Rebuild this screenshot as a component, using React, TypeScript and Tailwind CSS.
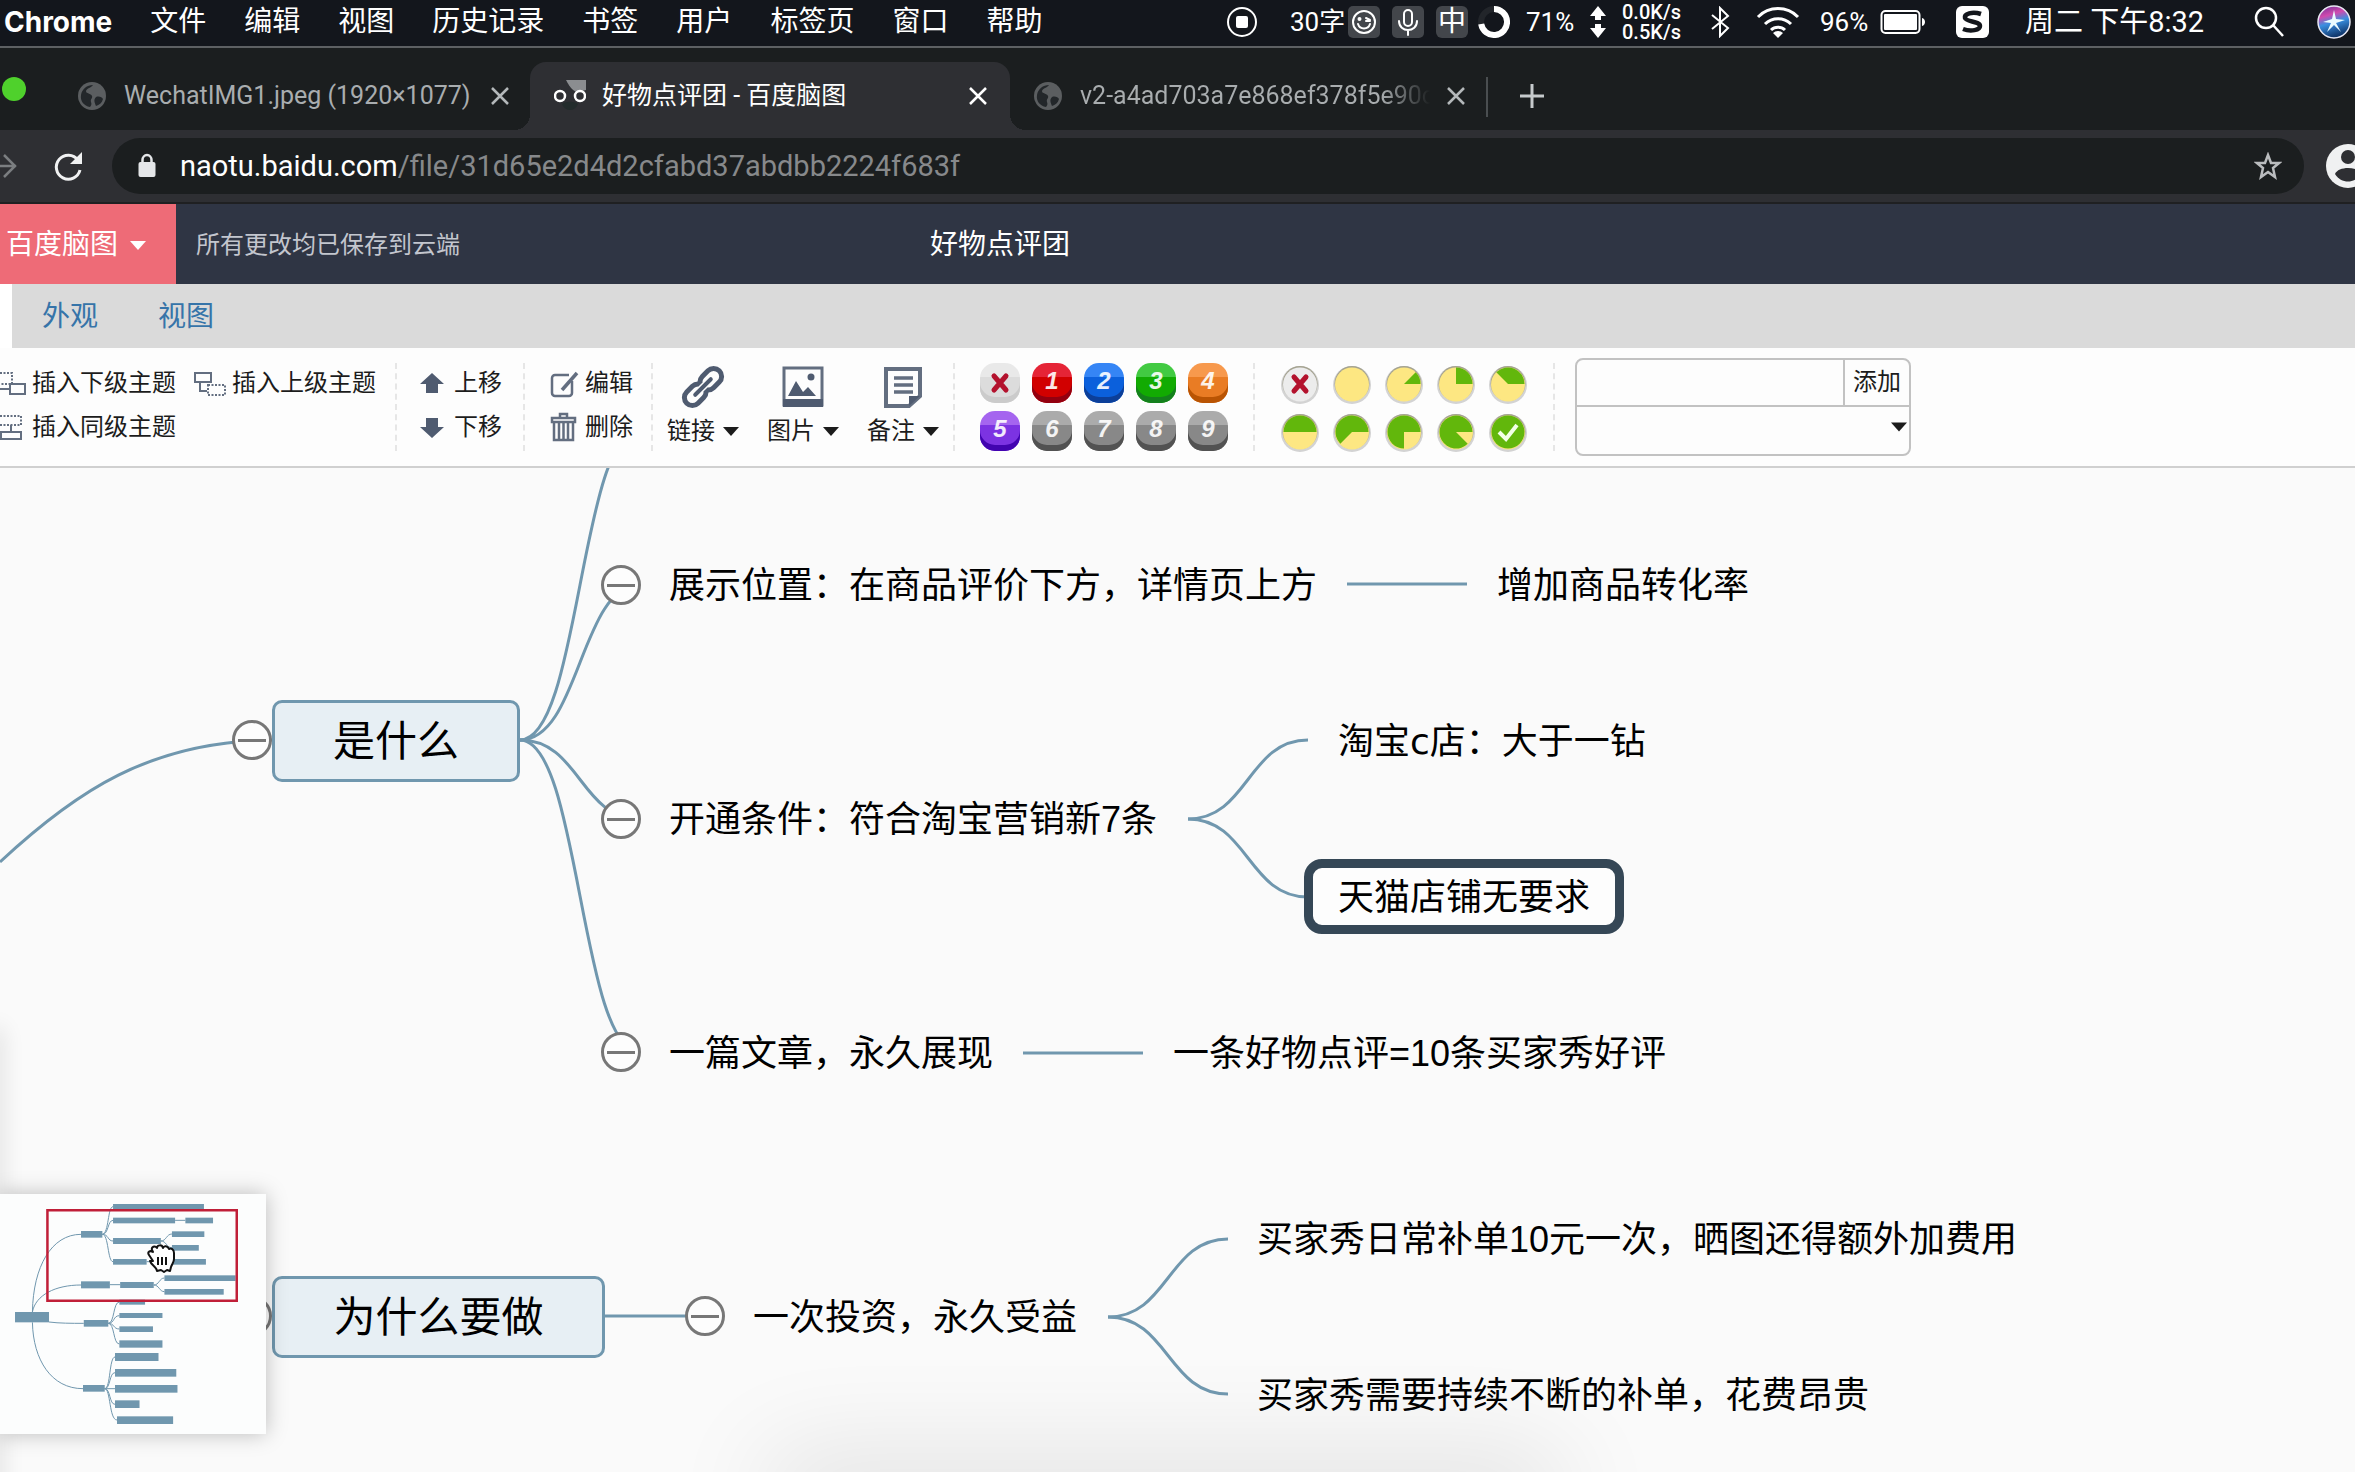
import type { ReactNode } from "react";

const ui = "font-['Roboto','Noto_Sans_CJK_SC',sans-serif]";

const menus = ["文件", "编辑", "视图", "历史记录", "书签", "用户", "标签页", "窗口", "帮助"];

function MenuBar() {
  return (
    <header className="flex h-12 shrink-0 items-center overflow-hidden border-b-2 border-[#5d6063] bg-[#13161c] pb-[2px] text-[28px] leading-10 whitespace-nowrap text-white">
      <nav className="flex gap-[38px] pl-1">
        <a href="#chrome" className="font-['Inter'] text-[28px] font-bold">Chrome</a>
        {menus.map((m) => (
          <a href="#menu" key={m}>{m}</a>
        ))}
      </nav>
      <div className="ml-auto flex shrink-0 items-center pr-1">
        <svg className="mr-8 size-8" viewBox="0 0 32 32">
          <circle cx="16" cy="16" r="14" fill="none" stroke="#fff" strokeWidth="2" />
          <rect x="10" y="10" width="12" height="12" rx="2" fill="#fff" />
        </svg>
        <span className="w-[58px] text-[26px]">30字</span>
        <svg className="mr-3 size-8" viewBox="0 0 32 32" fill="none" stroke="#fff" strokeWidth="2" strokeLinecap="round">
          <rect width="32" height="32" rx="5" fill="#43464b" stroke="none" />
          <circle cx="16" cy="16" r="11" />
          <path d="M10 18c2 6 10 6 12 0M18 12l4 2M18 15h4" />
          <circle cx="11.500" cy="13" r="1" fill="#fff" />
        </svg>
        <svg className="mr-3 size-8" viewBox="0 0 32 32" fill="none" stroke="#fff" strokeWidth="2" strokeLinecap="round">
          <rect width="32" height="32" rx="5" fill="#43464b" stroke="none" />
          <rect x="12" y="4" width="8" height="16" rx="4" />
          <path d="M7 15c0 12 18 12 18 0M16 24v5" />
        </svg>
        <span className="mr-[10px] flex size-8 items-center justify-center rounded-md bg-[#43464b] text-[28px]">中</span>
        <svg className="mr-4 size-8" viewBox="0 0 32 32" fill="none" strokeWidth="6">
          <circle cx="16" cy="16" r="13" stroke="#22252a" />
          <path d="M16 3a13 13 0 1 1-12.800 15" stroke="#fff" />
        </svg>
        <span className="w-16 text-[26px]">71%</span>
        <svg className="mr-4 h-8 w-4" viewBox="0 0 16 32" fill="#fff">
          <path d="M8 0l8 10h-5v4H5v-4H0zM8 32l8-10h-5v-4H5v4H0z" />
        </svg>
        <div className="w-[86px] text-[20px] leading-5 font-medium">
          <div>0.0K/s</div>
          <div>0.5K/s</div>
        </div>
        <svg className="mr-6 h-8 w-6" viewBox="0 0 24 32" fill="none" stroke="#fff" strokeWidth="2">
          <path d="M4 9l16 13-8 8V2l8 8L4 23" />
        </svg>
        <svg className="mr-5 h-8 w-11" viewBox="0 0 44 32" fill="none" stroke="#fff" strokeWidth="3">
          <path d="M2 11a28 28 0 0 1 40 0M9 18a18.500 18.500 0 0 1 26 0M15 24a10 10 0 0 1 14 0" />
          <path d="M17 27a7 7 0 0 1 10 0l-5 5z" fill="#fff" stroke="none" />
        </svg>
        <span className="w-[60px] text-[26px]">96%</span>
        <svg className="mr-[30px] h-7 w-[46px]" viewBox="0 0 46 28">
          <rect x="1.500" y="3" width="38" height="22" rx="4" fill="none" stroke="#fff" strokeWidth="2" />
          <rect x="4" y="6" width="33" height="16" rx="1" fill="#fff" />
          <path d="M42 10c4 1 4 7 0 8z" fill="#fff" />
        </svg>
        <svg className="mr-9 h-8 w-[33px]" viewBox="0 0 33 32">
          <rect width="33" height="32" rx="6" fill="#fff" />
          <path d="M25 8C16 5 8 8 9 12c1 4 15 3 15 8 0 4-9 6-17 3" fill="none" stroke="#13161c" strokeWidth="4.500" />
        </svg>
        <span className="w-[228px] text-[29px]">周二 下午8:32</span>
        <svg className="mr-8 size-8" viewBox="0 0 32 32" fill="none" stroke="#fff" strokeWidth="2.500">
          <circle cx="13" cy="12" r="10" />
          <path d="M20 19l10 11" />
        </svg>
        <svg className="size-[34px]" viewBox="0 0 34 34">
          <defs>
            <linearGradient id="siri" x1="0" y1="0" x2="0.300" y2="1">
              <stop offset="0" stopColor="#6a2f98" />
              <stop offset="0.350" stopColor="#d04aae" />
              <stop offset="0.600" stopColor="#3a8fe0" />
              <stop offset="1" stopColor="#123a70" />
            </linearGradient>
          </defs>
          <circle cx="17" cy="17" r="16" fill="url(#siri)" stroke="#e8e8f4" strokeWidth="1.500" />
          <path d="M17 5l2 9 9 1-9 3 5 9-7-7-7 7 4-9-8-1 9-3z" fill="#eafcff" />
        </svg>
      </div>
    </header>
  );
}

function Globe() {
  return (
    <svg className="size-7 shrink-0" viewBox="0 0 28 28">
      <circle cx="14" cy="14" r="14" fill="#5b5e60" />
      <path d="M15 3c-2 3-6 3-7 6 0 3 5 2 6 5 1 2-2 3-1 6 1 2 0 4-1 5C6 24 2 19 3 13 4 7 9 3 15 3zM18 15c3-1 6 0 7 2-1 4-4 6-7 7-1-3-3-6 0-9z" fill="#23272a" />
    </svg>
  );
}

function CloseTab({ active = false }: { active?: boolean }) {
  return (
    <button aria-label="关闭标签页" className={active ? "shrink-0 text-white" : "shrink-0 text-[#b4b8ba]"}>
      <svg className="size-5" viewBox="0 0 20 20" stroke="currentColor" strokeWidth="2.500">
        <path d="M2 2l16 16M18 2L2 18" />
      </svg>
    </button>
  );
}

function TabStrip() {
  return (
    <div className="flex h-[82px] shrink-0 items-end bg-[#1b1e1f] text-[25px] leading-8 whitespace-nowrap">
      <div className="w-[62px] self-center">
        <div className="ml-[2px] size-6 rounded-full bg-[#4fd12c]" />
      </div>
      <div className="flex h-[68px] w-[468px] items-center pr-[20px] pl-4 text-[#a9adaf]">
        <Globe />
        <span className="ml-[18px] flex-1">WechatIMG1.jpeg (1920×1077)</span>
        <CloseTab />
      </div>
      <div className="relative flex h-[68px] w-[480px] items-center rounded-t-2xl bg-[#2e2f33] pr-[22px] pl-6 text-white">
        <span className="absolute bottom-0 -left-4 size-4 bg-[radial-gradient(circle_at_0_0,#1b1e1f_16px,#2e2f33_16px)]" />
        <span className="absolute -right-4 bottom-0 size-4 bg-[radial-gradient(circle_at_100%_0,#1b1e1f_16px,#2e2f33_16px)]" />
        <svg className="h-8 w-8" viewBox="0 0 32 32" fill="none">
          <path d="M12 0h20v10l-8 2c-4 0-8-4-12-12z" fill="#8b8d90" />
          <path d="M8 24c4-3 12-3 16 0-3 8-13 8-16 0z" fill="#232c2c" />
          <circle cx="6" cy="16" r="5" stroke="#fff" strokeWidth="2.500" />
          <circle cx="26" cy="16" r="5" stroke="#fff" strokeWidth="2.500" />
        </svg>
        <span className="ml-4 flex-1">好物点评团 - 百度脑图</span>
        <CloseTab active />
      </div>
      <div className="flex h-[68px] w-[476px] items-center pr-5 pl-6 text-[#a9adaf]">
        <Globe />
        <span className="mr-4 ml-[18px] flex-1 overflow-hidden bg-[linear-gradient(90deg,#a9adaf_86%,#1b1e1f)] bg-clip-text text-transparent">v2-a4ad703a7e868ef378f5e90c</span>
        <CloseTab />
      </div>
      <div className="mb-[13px] h-10 w-[2px] bg-[#4a4e50]" />
      <button aria-label="新标签页" className="mb-[20px] ml-[30px] text-[#c6cacc]">
        <svg className="size-7" viewBox="0 0 28 28" stroke="currentColor" strokeWidth="3">
          <path d="M14 2v24M2 14h24" />
        </svg>
      </button>
    </div>
  );
}

function AddressBar() {
  return (
    <div className="flex h-[74px] shrink-0 items-center overflow-hidden border-b-2 border-[#1f2022] bg-[#2e2f33]">
      <button aria-label="前进" className="w-[50px]">
        <svg className="h-8 w-5" viewBox="0 0 20 32" fill="none" stroke="#7b7e81" strokeWidth="2.500">
          <path d="M0 16h16M4 5l11 11L4 27" />
        </svg>
      </button>
      <button aria-label="重新加载" className="w-[62px]">
        <svg className="size-9" viewBox="0 0 36 36" fill="none" stroke="#f0f1f2" strokeWidth="3">
          <path d="M28 12A12 12 0 1 0 30 22" />
          <path d="M32 4v12H20z" fill="#f0f1f2" stroke="none" />
        </svg>
      </button>
      <div className="flex h-14 flex-1 items-center rounded-full bg-[#1b1e1f] pr-[22px] pl-[26px]">
        <svg className="mr-6 h-[26px] w-[18px]" viewBox="0 0 18 26">
          <path d="M4.500 12V7a4.500 5 0 0 1 9 0v5" fill="none" stroke="#e4e6e8" strokeWidth="2.500" />
          <rect x="0.500" y="9" width="17" height="15" rx="2" fill="#e4e6e8" />
        </svg>
        <div role="textbox" aria-label="地址" className="flex-1 text-[29px] leading-10 text-[#87898b]">
          <span className="text-white">naotu.baidu.com</span>/file/31d65e2d4d2cfabd37abdbb2224f683f
        </div>
        <button aria-label="收藏">
          <svg className="size-7" viewBox="0 0 28 28" fill="none" stroke="#babcbe" strokeWidth="2.500">
            <path d="M14 3l3 8h8l-6 5 2 9-7-5-7 5 2-9-6-5h8z" />
          </svg>
        </button>
      </div>
      <button aria-label="个人资料" className="ml-[22px] w-[29px] overflow-hidden">
        <svg className="size-11 max-w-none" viewBox="0 0 44 44">
          <circle cx="22" cy="22" r="22" fill="#f0f1f2" />
          <circle cx="22" cy="13" r="7" fill="#2e2f33" />
          <path d="M9 30c3-8 23-8 26 0-6 10-20 10-26 0z" fill="#2e2f33" />
        </svg>
      </button>
    </div>
  );
}

function Caret({ className }: { className: string }) {
  return (
    <svg className={className} viewBox="0 0 16 9" fill="currentColor">
      <path d="M0 0h16L8 9z" />
    </svg>
  );
}

function AppHeader() {
  return (
    <div className="flex h-20 shrink-0 items-center bg-[#2f3544] whitespace-nowrap">
      <button className="flex h-full w-44 items-center gap-3 bg-[#ee6b77] pt-[2px] pl-[6px] text-[28px] text-white">
        百度脑图
        <Caret className="h-[9px] w-4" />
      </button>
      <span className="w-[754px] pt-[2px] pl-5 text-[24px] text-[#c3c6ce]">所有更改均已保存到云端</span>
      <h1 className="pt-[2px] text-[28px] text-white">好物点评团</h1>
    </div>
  );
}

const slate = "#636e80";

function InsertChild() {
  return (
    <svg className="h-8 w-[26px]" viewBox="0 0 26 32" fill="none" stroke={slate} strokeWidth="2">
      <path d="M0 6h12v11H0" strokeDasharray="2 1.500" />
      <path d="M0 22h9" />
      <rect x="10" y="17" width="15" height="10" />
    </svg>
  );
}

function InsertParent() {
  return (
    <svg className="h-8 w-8" viewBox="0 0 32 32" fill="none" stroke={slate} strokeWidth="2">
      <rect x="1" y="6" width="16" height="9" />
      <path d="M6 15v9h7" />
      <rect x="14" y="18" width="17" height="10" strokeDasharray="2 1.500" />
    </svg>
  );
}

function InsertSibling() {
  return (
    <svg className="h-8 w-[26px]" viewBox="0 0 26 32" fill="none" stroke={slate} strokeWidth="2">
      <path d="M0 5h21v9H0" strokeDasharray="2 1.500" />
      <path d="M11 14v8" />
      <rect x="1" y="21" width="20" height="7" />
    </svg>
  );
}

function Separator() {
  return <div className="h-[88px] border-l-2 border-dashed border-[#e6e6e6]" />;
}

function ToolButton({ icon, label }: { icon: ReactNode; label: string }) {
  return (
    <button className="flex h-11 items-center gap-[6px] text-left">
      {icon}
      <span>{label}</span>
    </button>
  );
}

function DropButton({ icon, label }: { icon: ReactNode; label: string }) {
  return (
    <button className="flex w-[100px] flex-col items-center">
      {icon}
      <span className="flex items-center gap-2 leading-10">
        {label}
        <Caret className="h-[9px] w-4" />
      </span>
    </button>
  );
}

const badges = [
  { t: "×", c: "bg-[linear-gradient(#e9e9e9_36%,#dcdcdc_36%)] shadow-[inset_0_-6px_0_#cbcbcb]" },
  { t: "1", c: "bg-[linear-gradient(#e52436_36%,#d10000_36%)] shadow-[inset_0_-6px_0_#930010]" },
  { t: "2", c: "bg-[linear-gradient(#3585f5_36%,#0b60dc_36%)] shadow-[inset_0_-6px_0_#0c3f99]" },
  { t: "3", c: "bg-[linear-gradient(#42ca42_36%,#12ab02_36%)] shadow-[inset_0_-6px_0_#14801d]" },
  { t: "4", c: "bg-[linear-gradient(#f7994d_36%,#e97c24_36%)] shadow-[inset_0_-6px_0_#b95403]" },
  { t: "5", c: "bg-[linear-gradient(#a565ef_36%,#7c33e2_36%)] shadow-[inset_0_-6px_0_#4204b0]" },
  ...["6", "7", "8", "9"].map((t) => ({
    t,
    c: "bg-[linear-gradient(#ababab_36%,#888888_36%)] shadow-[inset_0_-6px_0_#525252]",
  })),
];

const cross = (
  <path d="M14 13l12 14M26 13L14 27" stroke="#b3122d" strokeWidth="5" strokeLinecap="round" />
);

function Priority() {
  return (
    <div className="grid grid-cols-5 gap-x-3 gap-y-2">
      {badges.map((b) => (
        <button
          key={b.t}
          aria-label={"优先级 " + b.t}
          className={"flex size-10 items-center justify-center rounded-[15px] pb-1 font-['Liberation_Sans'] text-[24px] leading-none font-bold text-white/90 italic " + b.c}
        >
          {b.t === "×" ? <svg className="size-10 shrink-0" viewBox="0 -2 40 40">{cross}</svg> : b.t}
        </button>
      ))}
    </div>
  );
}

const wedges = [
  "",
  "",
  "M20 20H36.500A16.500 16.500 0 0 0 31.700 8.300z",
  "M20 20H36.500A16.500 16.500 0 0 0 20 3.500z",
  "M20 20H36.500A16.500 16.500 0 0 0 8.300 8.300z",
  "M20 20H36.500A16.500 16.500 0 0 0 3.500 20z",
  "M20 20H36.500A16.500 16.500 0 1 0 8.300 31.700z",
  "M20 20H36.500A16.500 16.500 0 1 0 20 36.500z",
  "M20 20H36.500A16.500 16.500 0 1 0 31.700 31.700z",
  "M36.500 20A16.500 16.500 0 1 0 3.500 20A16.500 16.500 0 1 0 36.500 20z",
];

function Progress() {
  return (
    <div className="grid grid-cols-5 gap-x-3 gap-y-2 pt-[2px]">
      {wedges.map((d, i) => (
        <button key={i} aria-label={"进度 " + i}>
          <svg className="size-10" viewBox="0 0 40 40" fill="none">
            <circle cx="20" cy="21" r="19" fill="#d3d3d3" />
            <circle cx="20" cy="19.500" r="17.500" fill="#a5a391" />
            <circle cx="20" cy="20.500" r="17" fill={i === 0 ? "#ececec" : "#fde782"} />
            {d && <path d={d} fill="#62b70c" />}
            {i === 0 && cross}
            {i === 9 && <path d="M11 20l7 7 11-14" stroke="#f2ffe6" strokeWidth="4" />}
          </svg>
        </button>
      ))}
    </div>
  );
}

function Ribbon() {
  return (
    <div className="flex h-[120px] shrink-0 items-center border-b-2 border-[#d0d0d0] bg-[#fdfdfd] text-[24px] whitespace-nowrap text-[#1c1c1c]">
      <div className="grid grid-cols-[194px_auto] pr-[19px] pb-1">
        <ToolButton icon={<InsertChild />} label="插入下级主题" />
        <ToolButton icon={<InsertParent />} label="插入上级主题" />
        <ToolButton icon={<InsertSibling />} label="插入同级主题" />
      </div>
      <Separator />
      <div className="w-[126px] pb-1 pl-[19px]">
        <ToolButton
          icon={
            <svg className="h-8 w-8" viewBox="0 0 32 32" fill="#4f5b70">
              <path d="M16 6l12 11h-6v9H10v-9H4z" />
            </svg>
          }
          label="上移"
        />
        <ToolButton
          icon={
            <svg className="h-8 w-8" viewBox="0 0 32 32" fill="#4f5b70">
              <path d="M16 27l12-11h-6V7H10v9H4z" />
            </svg>
          }
          label="下移"
        />
      </div>
      <Separator />
      <div className="w-[126px] pb-1 pl-[22px]">
        <ToolButton
          icon={
            <svg className="h-8 w-8" viewBox="0 0 32 32" fill="none" stroke={slate} strokeWidth="2.500">
              <path d="M22 8H8a3 3 0 0 0-3 3v15a3 3 0 0 0 3 3h14a3 3 0 0 0 3-3V14" />
              <path d="M30 6L15 23" strokeWidth="3.500" />
            </svg>
          }
          label="编辑"
        />
        <ToolButton
          icon={
            <svg className="h-8 w-8" viewBox="0 0 32 32" fill="none" stroke={slate} strokeWidth="2.500">
              <path d="M5 7h23v4H5zM13 7V3h7v4M7 11v18h19V11M12 11v18M16.500 11v18M21 11v18" />
            </svg>
          }
          label="删除"
        />
      </div>
      <Separator />
      <div className="flex">
        <DropButton
          icon={
            <svg className="h-12 w-11" viewBox="0 0 44 44" fill="none">
              <g transform="rotate(-45 22 22)">
                <rect x="-1" y="14" width="24" height="16" rx="8" stroke="#4f5b70" strokeWidth="5" />
                <rect x="21" y="14" width="24" height="16" rx="8" stroke="#4f5b70" strokeWidth="5" />
                <path d="M12 22h20" stroke="#fdfdfd" strokeWidth="7" />
                <path d="M11 22h22" stroke="#4f5b70" strokeWidth="4" strokeLinecap="round" />
              </g>
            </svg>
          }
          label="链接"
        />
        <DropButton
          icon={
            <svg className="h-12 w-11" viewBox="0 0 44 44" fill="none">
              <rect x="3" y="3" width="38" height="37" stroke="#636e80" strokeWidth="3" />
              <path d="M2 34h40v8H2z" fill="#4f5b70" />
              <path d="M7 31l8-15 7 11 5-5 8 9z" fill="#4f5b70" />
              <circle cx="30" cy="12" r="3.500" fill="#4f5b70" />
            </svg>
          }
          label="图片"
        />
        <DropButton
          icon={
            <svg className="h-12 w-11" viewBox="0 0 44 44" fill="none">
              <path d="M5 4h34v27L28 41H5z" stroke="#636e80" strokeWidth="4" />
              <path d="M28 41V31h11z" fill="#4f5b70" />
              <path d="M13 13h19M13 20h19M13 27h19" stroke="#636e80" strokeWidth="3.500" />
            </svg>
          }
          label="备注"
        />
      </div>
      <Separator />
      <div className="px-[25px]">
        <Priority />
      </div>
      <Separator />
      <div className="px-[25px]">
        <Progress />
      </div>
      <Separator />
      <div className="ml-5 flex h-[98px] w-[336px] flex-col rounded-lg border-2 border-[#c2c2c2]">
        <div className="flex h-[47px] border-b-2 border-[#c2c2c2]">
          <input aria-label="资源" className="min-w-0 flex-1 px-2 outline-none" />
          <button className="w-[66px] border-l-2 border-[#c2c2c2] pb-[2px]">添加</button>
        </div>
        <button aria-label="选择资源" className="flex flex-1 items-center justify-end pr-[2px] pb-2">
          <Caret className="h-[10px] w-4" />
        </button>
      </div>
    </div>
  );
}

const sans = "font-['Liberation_Sans','Noto_Sans_CJK_SC',sans-serif]";
const wideSans = "font-['DejaVu_Sans','Noto_Sans_CJK_SC',sans-serif]";

/* Node coordinates are relative to the canvas; y is the node's vertical centre. */
const leaves = [
  { x: 669, y: 118, f: sans, t: "展示位置：在商品评价下方，详情页上方" },
  { x: 1497, y: 118, f: sans, t: "增加商品转化率" },
  { x: 1338, y: 274, f: wideSans, t: "淘宝c店：大于一钻" },
  { x: 669, y: 352, f: sans, t: "开通条件：符合淘宝营销新7条" },
  { x: 669, y: 586, f: sans, t: "一篇文章，永久展现" },
  { x: 1173, y: 586, f: sans, t: "一条好物点评=10条买家秀好评" },
  { x: 753, y: 850, f: sans, t: "一次投资，永久受益" },
  { x: 1257, y: 772, f: sans, t: "买家秀日常补单10元一次，晒图还得额外加费用" },
  { x: 1257, y: 928, f: sans, t: "买家秀需要持续不断的补单，花费昂贵" },
];

const toggles = [
  { x: 252, y: 272 },
  { x: 621, y: 117 },
  { x: 621, y: 351 },
  { x: 621, y: 584 },
  { x: 252, y: 848 },
  { x: 705, y: 848 },
];

const links = [
  "M0 394C75 324 150 273 272 272",
  "M520 272C580 272 580 -38 640 -38",
  "M520 272C580 272 580 117 640 117",
  "M520 272C580 272 580 351 640 351",
  "M520 272C580 272 580 584 640 584",
  "M1347 116H1467",
  "M1188 351C1248 351 1248 272 1308 272",
  "M1188 351C1248 351 1248 429 1308 429",
  "M1023 585H1143",
  "M604 848H690",
  "M1108 849C1168 849 1168 771 1228 771",
  "M1108 849C1168 849 1168 926 1228 926",
];

const mapBars = [
  [286, 72, 230, 16], [286, 113, 157, 17], [469, 113, 70, 17], [205, 153, 54, 20], [435, 154, 82, 17],
  [286, 174, 121, 18], [435, 195, 68, 17], [286, 237, 85, 17], [435, 237, 86, 17], [205, 304, 73, 21],
  [304, 306, 85, 18], [416, 286, 180, 17], [416, 327, 150, 17], [302, 359, 65, 15], [302, 399, 109, 15],
  [302, 439, 85, 17], [302, 481, 109, 22], [212, 420, 62, 20], [291, 519, 110, 24], [291, 567, 155, 23],
  [291, 615, 158, 23], [291, 661, 62, 23], [296, 709, 142, 23], [210, 615, 55, 20], [38, 396, 86, 31],
];

const mapLinks =
  "M82 396C84 260 130 163 205 163M82 396C90 345 140 315 205 315M124 426C150 430 180 430 212 430M82 427C84 540 130 626 210 626" +
  "M259 163C276 160 272 80 286 80M259 163C275 163 272 121 286 121M259 163C275 163 272 183 286 183M259 163C275 163 272 245 286 245" +
  "M443 121H469M407 183C421 183 421 162 435 162M407 183C421 183 421 203 435 203M371 245H435M278 314H304" +
  "M389 315C403 315 403 294 416 294M389 315C403 315 403 335 416 335" +
  "M274 430C290 430 286 366 302 366M274 430C290 430 286 407 302 407M274 430C290 430 286 447 302 447M274 430C290 430 286 492 302 492" +
  "M265 626C280 626 276 531 291 531M265 626C280 626 276 578 291 578M265 626H291M265 626C280 626 276 673 291 673M265 626C280 626 276 720 296 720";

function Minimap() {
  return (
    <aside className="absolute top-[726px] left-0 h-60 w-[266px] bg-[#fcfdfd] shadow-[0_0_20px_rgba(0,0,0,0.25)]">
      <svg className="size-full" viewBox="0 42 673 720" preserveAspectRatio="none" fill="none">
        {mapBars.map(([x, y, w, h]) => (
          <rect key={x + "-" + y} x={x} y={y} width={w} height={h} fill="#7097ae" />
        ))}
        <path d={mapLinks} stroke="#7097ae" vectorEffect="non-scaling-stroke" />
        <rect x="120" y="91" width="479" height="271" stroke="#c01f38" strokeWidth="2.500" vectorEffect="non-scaling-stroke" />
      </svg>
      <svg className="absolute top-[50px] left-[146px] h-[30px] w-[32px]" viewBox="0 0 32 30" fill="#fff" stroke="#111" strokeWidth="2" strokeLinejoin="round">
        <path d="M7 17L3 11c-2-3 1-5 4-3L6 6c-1-3 3-5 5-2 0-3 5-4 6 0 1-3 5-2 6 1 2-1 5 0 5 4v6c0 3-2 5-3 8l-1 4-3-1-3 2-3-2-4 1c0-4-6-6-7-10z" />
        <path d="M12 13v8M16 13v8M20 13v8" fill="none" />
      </svg>
    </aside>
  );
}

function Canvas() {
  return (
    <main className="relative min-h-0 flex-1 overflow-hidden bg-[#fafafa] whitespace-nowrap text-black">
      <div className="absolute -bottom-10 left-[780px] h-10 w-[770px] rounded-full shadow-[0_0_100px_20px_rgba(0,0,0,0.1)]" />
      <div className="absolute top-[560px] -left-2 h-[480px] w-2 shadow-[0_0_22px_rgba(0,0,0,0.2)]" />
      <svg className="absolute top-0 left-0 h-[1004px] w-[2355px] max-w-none" viewBox="0 0 2355 1004" fill="none" stroke="#7097ae" strokeWidth="3">
        {links.map((d) => (
          <path key={d} d={d} />
        ))}
      </svg>
      {toggles.map((p) => (
        <button
          key={p.x + "-" + p.y}
          aria-label="折叠"
          className="absolute flex size-10 -translate-x-1/2 -translate-y-1/2 items-center justify-center rounded-full border-[3px] border-[#777] bg-[#fdfdfd]"
          style={{ left: p.x, top: p.y }}
        >
          <span className="h-[3px] w-7 bg-[#777]" />
        </button>
      ))}
      <div className="absolute top-[232px] left-[272px] flex h-[82px] w-[248px] items-center justify-center rounded-[10px] border-[3px] border-[#7097ae] bg-[#e7eff4] text-[42px]">
        是什么
      </div>
      <div className="absolute top-[808px] left-[272px] flex h-[82px] w-[333px] items-center justify-center rounded-[10px] border-[3px] border-[#7097ae] bg-[#e7eff4] text-[42px]">
        为什么要做
      </div>
      <div className="absolute top-[391px] left-[1304px] flex h-[75px] w-80 items-center justify-center rounded-[18px] border-[9px] border-[#354756] bg-[#fdfdfd] pt-[2px] text-[36px]">
        天猫店铺无要求
      </div>
      {leaves.map((n) => (
        <div key={n.t} className={"absolute -translate-y-1/2 text-[36px] leading-[48px] " + n.f} style={{ left: n.x, top: n.y }}>
          {n.t}
        </div>
      ))}
      <Minimap />
    </main>
  );
}

export default function App() {
  return (
    <div className={"flex h-screen min-h-[1472px] flex-col overflow-hidden " + ui}>
      <MenuBar />
      <TabStrip />
      <AddressBar />
      <AppHeader />
      <nav className="ml-3 flex h-16 shrink-0 items-center gap-[60px] bg-[#dadada] pt-[2px] pl-[30px] text-[28px] text-[#3674a9]">
        <a href="#look">外观</a>
        <a href="#view">视图</a>
      </nav>
      <Ribbon />
      <Canvas />
    </div>
  );
}
